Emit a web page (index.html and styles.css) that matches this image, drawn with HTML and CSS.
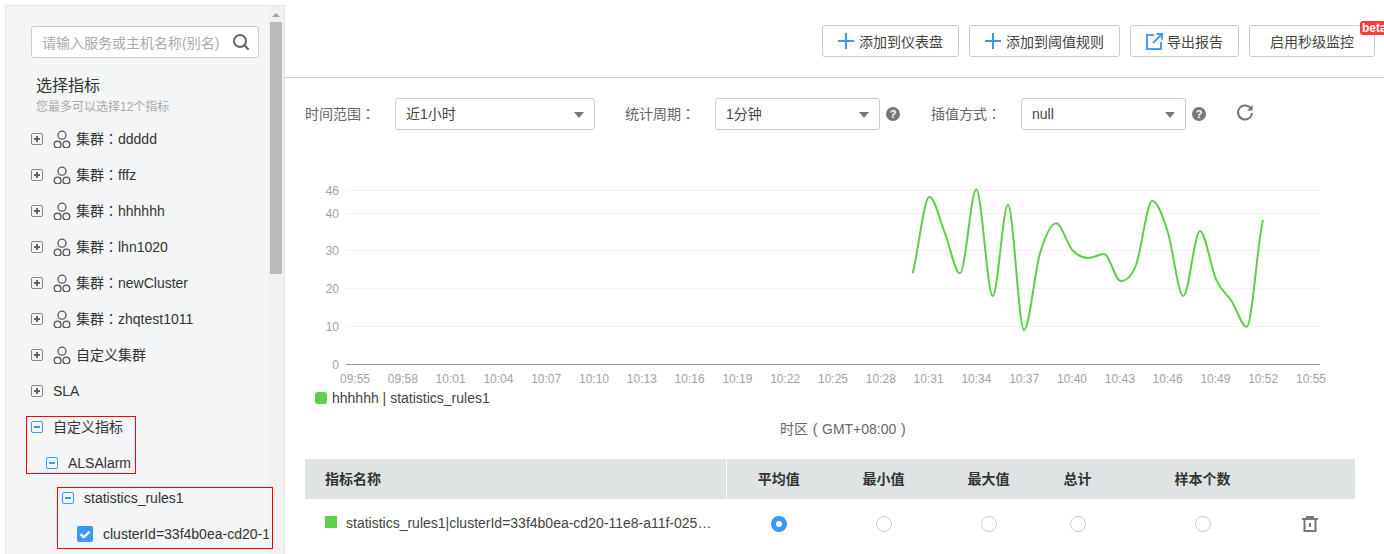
FILE: index.html
```html
<!DOCTYPE html>
<html lang="zh-CN">
<head>
  <meta charset="UTF-8" />
  <meta name="viewport" content="width=device-width, initial-scale=1.0"/>
  <title>添加指标</title>
  <link rel="stylesheet" href="styles.css">
</head>
<body>
  <aside class="sidebar">
    <div class="side-content">
      <div class="search">
        <span class="search-text">请输入服务或主机名称(别名)</span>
        <svg class="search-icon" width="18" height="18" viewBox="0 0 18 18"><circle cx="8" cy="8" r="6" fill="none" stroke="#666" stroke-width="2"/><path d="M12.5 12.5L16.5 16.5" stroke="#666" stroke-width="2.2"/></svg>
      </div>
      <h3 class="side-title">选择指标</h3>
      <p class="side-sub">您最多可以选择12个指标</p>

      <ul class="tree">
        <li class="row"><span class="toggle"></span><svg class="cluster" viewBox="0 0 18 18"><use href="#cluster-shape"/></svg><span class="cjk">集群<span class="punct" lang="zh-TW">：</span>ddddd</span></li>
        <li class="row"><span class="toggle"></span><svg class="cluster" viewBox="0 0 18 18"><use href="#cluster-shape"/></svg><span class="cjk">集群<span class="punct" lang="zh-TW">：</span>fffz</span></li>
        <li class="row"><span class="toggle"></span><svg class="cluster" viewBox="0 0 18 18"><use href="#cluster-shape"/></svg><span class="cjk">集群<span class="punct" lang="zh-TW">：</span>hhhhhh</span></li>
        <li class="row"><span class="toggle"></span><svg class="cluster" viewBox="0 0 18 18"><use href="#cluster-shape"/></svg><span class="cjk">集群<span class="punct" lang="zh-TW">：</span>lhn1020</span></li>
        <li class="row"><span class="toggle"></span><svg class="cluster" viewBox="0 0 18 18"><use href="#cluster-shape"/></svg><span class="cjk">集群<span class="punct" lang="zh-TW">：</span>newCluster</span></li>
        <li class="row"><span class="toggle"></span><svg class="cluster" viewBox="0 0 18 18"><use href="#cluster-shape"/></svg><span class="cjk">集群<span class="punct" lang="zh-TW">：</span>zhqtest1011</span></li>
        <li class="row"><span class="toggle"></span><svg class="cluster" viewBox="0 0 18 18"><use href="#cluster-shape"/></svg><span class="cjk">自定义集群</span></li>
        <li class="row"><span class="toggle"></span><span class="row-plain">SLA</span></li>
        <li class="row"><span class="toggle open"></span><span class="row-plain cjk">自定义指标</span></li>
        <li class="row level-1"><span class="toggle open"></span><span class="row-sub">ALSAlarm</span></li>
        <li class="row level-2"><span class="toggle open"></span><span class="row-sub">statistics_rules1</span></li>
        <li class="row level-3">
          <span class="checkbox"><svg width="16" height="16" viewBox="0 0 16 16"><path d="M3.5 8.2L6.8 11.2L12.5 5.6" fill="none" stroke="#fff" stroke-width="2.4"/></svg></span>
          <span class="row-leaf">clusterId=33f4b0ea-cd20-1</span>
        </li>
      </ul>
    </div>

    <div class="scrollbar">
      <span class="scroll-up"></span>
      <span class="scroll-thumb"></span>
    </div>

    <!-- red annotation boxes drawn on top of the tree -->
    <div class="mark mark-a"></div>
    <div class="mark mark-b"></div>
  </aside>

  <main class="main">
    <div class="toolbar">
      <button class="btn btn-dash"><svg width="18" height="18" viewBox="0 0 18 18"><path d="M9 1V17M1 9H17" stroke="#3b97ff" stroke-width="2"/></svg>添加到仪表盘</button>
      <button class="btn btn-rule"><svg width="18" height="18" viewBox="0 0 18 18"><path d="M9 1V17M1 9H17" stroke="#3b97ff" stroke-width="2"/></svg>添加到阈值规则</button>
      <button class="btn btn-export"><svg width="17" height="17" viewBox="0 0 17 17"><path d="M8 2H1V16H15V9" fill="none" stroke="#4a9bff" stroke-width="2"/><path d="M7 10L15 2M10.5 1H16V6.5" fill="none" stroke="#4a9bff" stroke-width="2"/></svg>导出报告</button>
      <button class="btn btn-second">启用秒级监控<span class="beta">beta</span></button>
    </div>

    <div class="filters">
      <label class="filter-label">时间范围<span class="punct" lang="zh-TW">：</span></label>
      <div class="select select-wide">近1小时<span class="caret"></span></div>
      <label class="filter-label gap">统计周期<span class="punct" lang="zh-TW">：</span></label>
      <div class="select">1分钟<span class="caret"></span></div>
      <span class="help">?</span>
      <label class="filter-label gap-2">插值方式<span class="punct" lang="zh-TW">：</span></label>
      <div class="select">null<span class="caret"></span></div>
      <span class="help">?</span>
      <svg class="refresh" width="18" height="18" viewBox="0 0 18 18"><path d="M14.6 4.2A7 7 0 1 0 16 9" fill="none" stroke="#777" stroke-width="2"/><path d="M16.6 1V6.4H11.2Z" fill="#777"/></svg>
    </div>

    <svg class="chart" width="1099" height="220" viewBox="285 170 1099 220">
      <g class="grid">
        <path d="M346 190.5H1320M346 213.5H1320M346 250.5H1320M346 288.5H1320M346 326.5H1320"/>
      </g>
      <path class="axis" d="M346 364.5H1320"/>
      <g class="y-ticks">
        <text x="339" y="195">46</text>
        <text x="339" y="218">40</text>
        <text x="339" y="255">30</text>
        <text x="339" y="293">20</text>
        <text x="339" y="331">10</text>
        <text x="339" y="369">0</text>
      </g>
      <g class="x-ticks">
        <text x="355" y="383">09:55</text>
        <text x="402.8" y="383">09:58</text>
        <text x="450.6" y="383">10:01</text>
        <text x="498.4" y="383">10:04</text>
        <text x="546.2" y="383">10:07</text>
        <text x="594" y="383">10:10</text>
        <text x="641.8" y="383">10:13</text>
        <text x="689.6" y="383">10:16</text>
        <text x="737.4" y="383">10:19</text>
        <text x="785.2" y="383">10:22</text>
        <text x="833" y="383">10:25</text>
        <text x="880.8" y="383">10:28</text>
        <text x="928.6" y="383">10:31</text>
        <text x="976.4" y="383">10:34</text>
        <text x="1024.2" y="383">10:37</text>
        <text x="1072" y="383">10:40</text>
        <text x="1119.8" y="383">10:43</text>
        <text x="1167.6" y="383">10:46</text>
        <text x="1215.4" y="383">10:49</text>
        <text x="1263.2" y="383">10:52</text>
        <text x="1311" y="383">10:55</text>
      </g>
      <path class="line" d="M912.7 273.3C918 253.3 924 196.7 929.3 196.7C934.6 196.7 939.8 220.5 945 233.3C950 246.1 955 273.3 960 273.3C965.4 273.3 971 189.3 976.3 189.3C981.7 189.3 987.3 296 992.7 296C997.8 296 1002.9 204.7 1008 204.7C1013.3 204.7 1018.7 330 1024 330C1029.3 330 1034.7 271.1 1040 253.3C1045.4 235.5 1050.9 223.3 1056.3 223.3C1061.6 223.3 1067 244.2 1072.3 250C1077.6 255.8 1083 258 1088.3 258C1093.5 258 1098.8 254 1104 254C1109.6 254 1115.1 281 1120.7 281C1125.8 281 1130.9 278.4 1136 265C1141.4 251.6 1146.9 200.7 1152.3 200.7C1157.4 200.7 1162.6 215.8 1167.7 231.7C1172.9 247.6 1178.1 296 1183.3 296C1188.9 296 1194.4 231 1200 231C1205.3 231 1210.7 267.5 1216 279.3C1221.3 291.1 1226.7 293.8 1232 301.7C1236.9 309.6 1241.8 326.7 1246.7 326.7C1252.1 326.7 1257.6 240 1263 220"/>
    </svg>

    <div class="legend"><span class="legend-dot"></span>hhhhhh | statistics_rules1</div>
    <div class="timezone">时区<span class="paren">(</span>GMT+08:00<span class="paren">)</span></div>

    <table class="metrics">
      <colgroup>
        <col class="col-name"><col class="col-a"><col class="col-a"><col class="col-a"><col class="col-b"><col class="col-c"><col class="col-d"><col class="col-e">
      </colgroup>
      <thead>
        <tr>
          <th class="th-name">指标名称</th>
          <th>平均值</th>
          <th>最小值</th>
          <th>最大值</th>
          <th>总计</th>
          <th>样本个数</th>
          <th></th>
          <th></th>
        </tr>
      </thead>
      <tbody>
        <tr>
          <td class="td-name"><span class="swatch"></span>statistics_rules1|clusterId=33f4b0ea-cd20-11e8-a11f-025…</td>
          <td><span class="radio checked"></span></td>
          <td><span class="radio"></span></td>
          <td><span class="radio"></span></td>
          <td><span class="radio"></span></td>
          <td><span class="radio"></span></td>
          <td><svg class="trash" width="16" height="16" viewBox="0 0 16 16"><path d="M0 3H16M5 3V1H11V3" fill="none" stroke="#777" stroke-width="2"/><path d="M2.5 3V15H13.5V3" fill="none" stroke="#777" stroke-width="2"/><path d="M8 7V11" stroke="#777" stroke-width="2"/></svg></td>
          <td></td>
        </tr>
      </tbody>
    </table>
  </main>

  <svg width="0" height="0" class="defs">
    <defs>
      <g id="cluster-shape" fill="none" stroke="#555" stroke-width="1.3">
        <circle cx="9" cy="5.2" r="4"/>
        <circle cx="4.6" cy="14.6" r="3.4"/>
        <circle cx="13.4" cy="14.6" r="3.4"/>
      </g>
    </defs>
  </svg>
</body>
</html>
```

FILE: styles.css
```css
* {
  box-sizing: border-box;
}

html, body {
  height: 100%;
}

body {
  margin: 0;
  display: flex;
  overflow: hidden;
  background-color: #fff;
  color: #333;
  font-family: "Liberation Sans", "Noto Sans CJK SC", sans-serif;
  font-size: 14px;
}

.defs {
  position: absolute;
}

/* centred full-width colon */
.punct {
  font-family: "Noto Sans CJK TC", sans-serif;
}

/* left panel */
.sidebar {
  position: relative;
  flex: none;
  display: flex;
  width: 280px;
  margin: 5px 0 0 5px;
  background-color: #f3f5f7;
  border: 1px solid #e6e6e6;
  border-bottom: none;
}

.side-content {
  flex: 1;
  min-width: 0;
  padding: 20px 0 0 25px;
}

.search {
  display: flex;
  align-items: center;
  justify-content: space-between;
  width: 228px;
  height: 32px;
  padding: 0 8px 0 10px;
  background-color: #fff;
  border: 1px solid #ccc;
  border-radius: 3px;
}

.search-text {
  color: #aaa;
  white-space: nowrap;
}

.search-icon {
  flex: none;
}

.side-title {
  margin: 18px 0 0 5px;
  font-size: 16px;
  font-weight: 400;
  line-height: 20px;
}

.side-sub {
  margin: 2px 0 5px 5px;
  color: #aaa;
  font-size: 12px;
  line-height: 18px;
  white-space: nowrap;
}

.tree {
  margin: 0;
  padding: 0;
  list-style: none;
}

.row {
  display: flex;
  align-items: center;
  height: 36px;
  white-space: nowrap;
}

.cjk {
  padding-bottom: 2px;
}

.toggle {
  position: relative;
  flex: none;
  width: 12px;
  height: 12px;
  margin-right: 1px;
  border: 1px solid #888;
  border-radius: 2px;
}

.toggle::before,
.toggle::after {
  content: "";
  position: absolute;
  background-color: #666;
}

.toggle::before {
  left: 2px;
  top: 4px;
  width: 6px;
  height: 2px;
}

.toggle::after {
  left: 4px;
  top: 2px;
  width: 2px;
  height: 6px;
}

.toggle.open {
  border-color: #3b97ff;
}

.toggle.open::before {
  background-color: #3b97ff;
}

.toggle.open::after {
  display: none;
}

.cluster {
  flex: none;
  width: 18px;
  height: 18px;
  margin: 0 5px 0 9px;
}

.row-plain {
  margin-left: 9px;
}

.row-sub {
  margin-left: 9px;
}

.level-1 {
  padding-left: 15px;
}

.level-2 {
  margin-top: -1px;
  padding-left: 31px;
}

.level-3 {
  padding-left: 46px;
}

.checkbox {
  flex: none;
  width: 16px;
  height: 16px;
  background-color: #3b97ff;
  border-radius: 2px;
}

.checkbox svg {
  display: block;
}

.row-leaf {
  margin-left: 10px;
}

.scrollbar {
  flex: none;
  display: flex;
  flex-direction: column;
  width: 15px;
  background-color: #f1f1f1;
}

.scroll-up {
  width: 0;
  height: 0;
  margin: 7px 0 5px 3px;
  border-left: 4px solid transparent;
  border-right: 4px solid transparent;
  border-bottom: 4px solid #a3a3a3;
}

.scroll-thumb {
  width: 12px;
  height: 252px;
  margin-left: 1px;
  background-color: #bbb;
}

.mark {
  position: absolute;
  border: 1px solid #f00;
}

.mark-a {
  left: 20px;
  top: 410px;
  width: 110px;
  height: 58px;
}

.mark-b {
  left: 51px;
  top: 481px;
  width: 216px;
  height: 62px;
}

/* right side */
.main {
  flex: 1;
  min-width: 0;
}

.toolbar {
  display: flex;
  justify-content: flex-end;
  gap: 10px;
  height: 78px;
  padding: 25px 9px 0 0;
  border-bottom: 1px solid #ccc;
}

.btn {
  position: relative;
  display: flex;
  align-items: center;
  height: 32px;
  padding: 0;
  background-color: #fff;
  border: 1px solid #ccc;
  border-radius: 3px;
  color: #444;
  font-family: inherit;
  font-size: 14px;
}

.btn-dash {
  width: 137px;
  padding-left: 14px;
  gap: 4px;
}

.btn-rule {
  width: 151px;
  padding-left: 14px;
  gap: 4px;
}

.btn-export {
  width: 109px;
  padding-left: 15px;
  gap: 4px;
}

.btn-second {
  width: 126px;
  padding-left: 20px;
}

.beta {
  position: absolute;
  left: 110px;
  top: -5px;
  width: 30px;
  height: 14px;
  padding-left: 2px;
  background-color: #ff3b3b;
  border-radius: 3px;
  color: #fff;
  font-size: 12px;
  font-weight: 700;
  line-height: 14px;
  text-align: left;
}

.filters {
  display: flex;
  align-items: center;
  height: 32px;
  margin-top: 20px;
  padding-left: 20px;
}

.filter-label {
  flex: none;
  width: 90px;
  padding-bottom: 2px;
  color: #666;
  white-space: nowrap;
}

.filter-label.gap {
  margin-left: 30px;
}

.filter-label.gap-2 {
  margin-left: 31px;
}

.select {
  position: relative;
  flex: none;
  width: 165px;
  height: 32px;
  padding-left: 10px;
  border: 1px solid #ccc;
  border-radius: 3px;
  color: #444;
  line-height: 30px;
}

.select-wide {
  width: 200px;
}

.caret {
  position: absolute;
  right: 10px;
  top: 13px;
  width: 0;
  height: 0;
  border-left: 5px solid transparent;
  border-right: 5px solid transparent;
  border-top: 6px solid #777;
}

.help {
  flex: none;
  width: 14px;
  height: 14px;
  margin-left: 6px;
  background-color: #777;
  border-radius: 50%;
  color: #fff;
  font-size: 11px;
  font-weight: 700;
  line-height: 14px;
  text-align: center;
}

.refresh {
  flex: none;
  margin-left: 30px;
  margin-top: -3px;
}

.chart {
  display: block;
  margin-top: 40px;
}

.grid path {
  fill: none;
  stroke: #f2f2f2;
}

.axis {
  fill: none;
  stroke: #999;
}

.y-ticks text,
.x-ticks text {
  fill: #a3a3a3;
  font-size: 12px;
}

.y-ticks text {
  text-anchor: end;
}

.x-ticks text {
  text-anchor: middle;
}

.line {
  fill: none;
  stroke: #5dcf4b;
  stroke-width: 2;
}

.legend {
  display: flex;
  align-items: center;
  height: 16px;
  padding-left: 30px;
  color: #444;
}

.legend-dot {
  width: 12px;
  height: 12px;
  margin-right: 5px;
  background-color: #5dcf4b;
  border-radius: 3px;
}

.timezone {
  margin: 13px 0 20px 495px;
  color: #666;
  line-height: 20px;
  white-space: nowrap;
}

/* brackets sit in the middle of a one-character box */
.paren {
  display: inline-block;
  width: 14px;
  text-align: center;
}

.metrics {
  width: 1050px;
  margin-left: 20px;
  border-collapse: collapse;
  table-layout: fixed;
}

.col-name { width: 421px; }
.col-a { width: 105px; }
.col-b { width: 73px; }
.col-c { width: 177px; }
.col-d { width: 37px; }
.col-e { width: 27px; }

.metrics th {
  height: 40px;
  padding: 0 0 2px;
  background-color: #e0e3e4;
  font-size: 14px;
  font-weight: 700;
  text-align: center;
}

.metrics th.th-name {
  padding-left: 20px;
  border-right: 1px solid #fff;
  text-align: left;
}

.metrics td {
  height: 48px;
  padding: 0;
  text-align: center;
}

.metrics td.td-name {
  padding-left: 20px;
  color: #444;
  text-align: left;
  white-space: nowrap;
}

.swatch {
  display: inline-block;
  width: 12px;
  height: 12px;
  margin-right: 9px;
  background-color: #5dcf4b;
}

.radio {
  display: inline-block;
  width: 16px;
  height: 16px;
  background-color: #fff;
  border: 1px solid #ccc;
  border-radius: 50%;
  vertical-align: middle;
}

.radio.checked {
  border: 5px solid #3b97ff;
}

.trash {
  vertical-align: middle;
}
```
